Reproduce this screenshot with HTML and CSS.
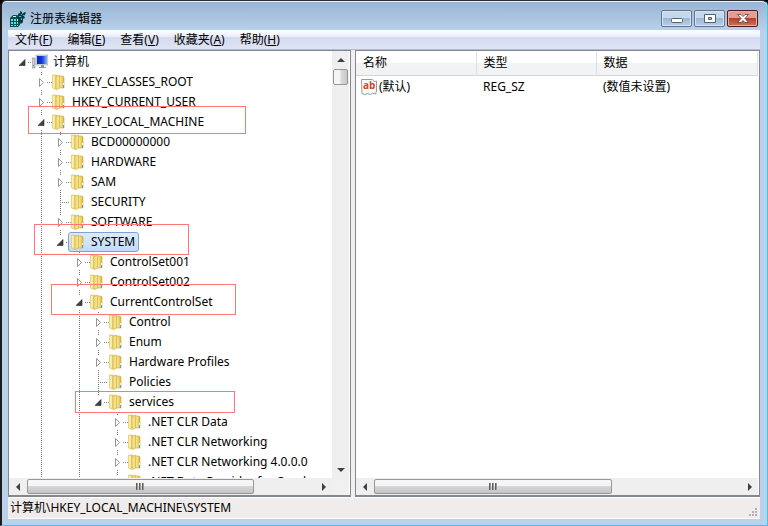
FILE: index.html
```html
<!DOCTYPE html>
<html lang="zh-CN">
<head>
    <meta charset="UTF-8">
    <meta name="viewport" content="width=device-width, initial-scale=1.0">
    <title>注册表编辑器</title>
    <link rel="stylesheet" href="styles.css">
</head>
<body>
    <svg class="defs" aria-hidden="true">
        <linearGradient id="gold" x1="0" x2="1"><stop offset="0" stop-color="#f9eda6"/><stop offset=".5" stop-color="#f0d873"/><stop offset="1" stop-color="#d8b33c"/></linearGradient>
        <linearGradient id="screen" x1="0" x2="1"><stop offset="0" stop-color="#0a2ab0"/><stop offset=".5" stop-color="#1238d8"/><stop offset="1" stop-color="#8cb4f4"/></linearGradient>
        <symbol id="folder" viewBox="0 0 16 16">
            <path d="M1.500 1h4l1 1v13H4l-2.500-1z" fill="url(#gold)" stroke="#d9bd55" stroke-width=".6"/>
            <path d="M8 2h4l1 1v11H8z" fill="url(#gold)" stroke="#cda83c" stroke-width=".6"/>
            <path d="M5 2.500L8.500 1v13L5.500 15.500 5 15z" fill="#f3e08a" stroke="#cfae48" stroke-width=".6"/>
            <path d="M3 2v11.500" stroke="#fff8cc"/>
            <path d="M12 11h1v3h-1z" fill="#4ba3df"/>
            <path d="M12 9h1v2h-1z" fill="#e9f6ff"/>
        </symbol>
        <symbol id="closed" viewBox="0 0 7 9"><path d="M1.500 .5v8L5.500 4.500z" fill="#fff" stroke="#969696"/></symbol>
        <symbol id="open" viewBox="0 0 7 9"><path d="M6 1.500v6H0z" fill="#404040" stroke="#262626" stroke-width=".6"/></symbol>
        <symbol id="left" viewBox="0 0 8 8"><path d="M6 0v8L2 4z" fill="#404040"/></symbol>
        <symbol id="right" viewBox="0 0 8 8"><path d="M2 0v8l4-4z" fill="#404040"/></symbol>
        <symbol id="up" viewBox="0 0 8 8"><path d="M0 6h8L4 2z" fill="#404040"/></symbol>
        <symbol id="down" viewBox="0 0 8 8"><path d="M0 2h8L4 6z" fill="#404040"/></symbol>
    </svg>

    <div class="window">
        <header class="titlebar">
            <svg class="app-icon" viewBox="0 0 16 16" aria-hidden="true">
                <path d="M0 7l3-3h4l3 2v8l-2 2H0z" fill="#0a4f52"/>
                <path d="M1 8h2v2H1zM4 8h2v2H4zM1 11h2v2H1zM4 11h2v2H4zM1 14h2v1H1zM4 14h2v1H4zM7 11h1v2H7zM7 14h1v1H7z" fill="#5fe3e0"/>
                <path d="M3 5h3v1H3zM7 8h1v2H7z" fill="#c8ffff"/>
                <path d="M8 3l2-1V0l2 1v2l3-2 1 1-2 3 1 2-2 1v3l-2 2-2-2-1-3z" fill="#083b3e"/>
                <path d="M11 3h1v1h-1zM13 4h1v1h-1zM9 5h2v1H9zM11 7h1v2h-1z" fill="#32c8c4"/>
            </svg>
            <h1>注册表编辑器</h1>
            <div class="controls">
                <button type="button" aria-label="最小化">
                    <svg width="12" height="11"><rect x=".5" y="5.500" width="11" height="4" rx="1" fill="#fff" stroke="#55606e"/></svg>
                </button>
                <button type="button" aria-label="最大化">
                    <svg width="12" height="11"><path d="M.5 1.500h11v8H.5zM4.500 4.500v2h3v-2z" fill="#fff" fill-rule="evenodd" stroke="#55606e"/></svg>
                </button>
                <button type="button" class="close" aria-label="关闭">
                    <svg width="12" height="11"><path d="M.5 1.500h3.500l2 2 2-2h3.500l-3.500 4 3.500 4H8l-2-2-2 2H.5l3.500-4z" fill="#fff" stroke="#5b3b45" stroke-width=".8"/></svg>
                </button>
            </div>
        </header>

        <nav class="menu">
            <button type="button">文件(<u>F</u>)</button>
            <button type="button">编辑(<u>E</u>)</button>
            <button type="button">查看(<u>V</u>)</button>
            <button type="button">收藏夹(<u>A</u>)</button>
            <button type="button">帮助(<u>H</u>)</button>
        </nav>

        <main class="panes">
            <section class="pane tree-pane">
                <div class="tree-view">
                    <ul class="tree root">
                        <li>
                            <div class="row"><button type="button" class="toggle" aria-label="折叠"><svg><use href="#open"/></svg></button>
                                <a href="#"><svg class="icon" viewBox="0 0 16 16">
                                    <path d="M0 4h3v10H0z" fill="#c9ced3" stroke="#81888f" stroke-width=".6"/><path d="M1 11h1v1H1z" fill="#3fc43f"/>
                                    <path d="M4 1h12v10H4z" fill="#d9dde3" stroke="#989ea6" stroke-width=".6"/><path d="M5 2h10v8H5z" fill="url(#screen)"/>
                                    <path d="M9 11h3v2h2v1H7v-1h2z" fill="#8b939b"/></svg>计算机</a></div>
                            <ul class="tree">
                                <li><div class="row"><button type="button" class="toggle" aria-label="展开"><svg><use href="#closed"/></svg></button><a href="#"><svg class="icon"><use href="#folder"/></svg>HKEY_CLASSES_ROOT</a></div></li>
                                <li><div class="row"><button type="button" class="toggle" aria-label="展开"><svg><use href="#closed"/></svg></button><a href="#"><svg class="icon"><use href="#folder"/></svg>HKEY_CURRENT_USER</a></div></li>
                                <li class="more">
                                    <div class="row"><button type="button" class="toggle" aria-label="折叠"><svg><use href="#open"/></svg></button><a href="#"><svg class="icon"><use href="#folder"/></svg>HKEY_LOCAL_MACHINE</a><span class="mark mark-machine"></span></div>
                                    <ul class="tree">
                                        <li><div class="row"><button type="button" class="toggle" aria-label="展开"><svg><use href="#closed"/></svg></button><a href="#"><svg class="icon"><use href="#folder"/></svg>BCD00000000</a></div></li>
                                        <li><div class="row"><button type="button" class="toggle" aria-label="展开"><svg><use href="#closed"/></svg></button><a href="#"><svg class="icon"><use href="#folder"/></svg>HARDWARE</a></div></li>
                                        <li><div class="row"><button type="button" class="toggle" aria-label="展开"><svg><use href="#closed"/></svg></button><a href="#"><svg class="icon"><use href="#folder"/></svg>SAM</a></div></li>
                                        <li><div class="row leaf"><a href="#"><svg class="icon"><use href="#folder"/></svg>SECURITY</a></div></li>
                                        <li><div class="row"><button type="button" class="toggle" aria-label="展开"><svg><use href="#closed"/></svg></button><a href="#"><svg class="icon"><use href="#folder"/></svg>SOFTWARE</a></div></li>
                                        <li>
                                            <div class="row"><button type="button" class="toggle" aria-label="折叠"><svg><use href="#open"/></svg></button><a href="#" class="selected"><svg class="icon"><use href="#folder"/></svg>SYSTEM</a><span class="mark mark-system"></span></div>
                                            <ul class="tree">
                                                <li><div class="row"><button type="button" class="toggle" aria-label="展开"><svg><use href="#closed"/></svg></button><a href="#"><svg class="icon"><use href="#folder"/></svg>ControlSet001</a></div></li>
                                                <li><div class="row"><button type="button" class="toggle" aria-label="展开"><svg><use href="#closed"/></svg></button><a href="#"><svg class="icon"><use href="#folder"/></svg>ControlSet002</a></div></li>
                                                <li class="more">
                                                    <div class="row"><button type="button" class="toggle" aria-label="折叠"><svg><use href="#open"/></svg></button><a href="#"><svg class="icon"><use href="#folder"/></svg>CurrentControlSet</a><span class="mark mark-current"></span></div>
                                                    <ul class="tree">
                                                        <li><div class="row"><button type="button" class="toggle" aria-label="展开"><svg><use href="#closed"/></svg></button><a href="#"><svg class="icon"><use href="#folder"/></svg>Control</a></div></li>
                                                        <li><div class="row"><button type="button" class="toggle" aria-label="展开"><svg><use href="#closed"/></svg></button><a href="#"><svg class="icon"><use href="#folder"/></svg>Enum</a></div></li>
                                                        <li><div class="row"><button type="button" class="toggle" aria-label="展开"><svg><use href="#closed"/></svg></button><a href="#"><svg class="icon"><use href="#folder"/></svg>Hardware Profiles</a></div></li>
                                                        <li><div class="row leaf"><a href="#"><svg class="icon"><use href="#folder"/></svg>Policies</a></div></li>
                                                        <li>
                                                            <div class="row"><button type="button" class="toggle" aria-label="折叠"><svg><use href="#open"/></svg></button><a href="#"><svg class="icon"><use href="#folder"/></svg>services</a><span class="mark mark-services"></span></div>
                                                            <ul class="tree">
                                                                <li><div class="row"><button type="button" class="toggle" aria-label="展开"><svg><use href="#closed"/></svg></button><a href="#"><svg class="icon"><use href="#folder"/></svg>.NET CLR Data</a></div></li>
                                                                <li><div class="row"><button type="button" class="toggle" aria-label="展开"><svg><use href="#closed"/></svg></button><a href="#"><svg class="icon"><use href="#folder"/></svg>.NET CLR Networking</a></div></li>
                                                                <li><div class="row"><button type="button" class="toggle" aria-label="展开"><svg><use href="#closed"/></svg></button><a href="#"><svg class="icon"><use href="#folder"/></svg>.NET CLR Networking 4.0.0.0</a></div></li>
                                                                <li><div class="row"><button type="button" class="toggle" aria-label="展开"><svg><use href="#closed"/></svg></button><a href="#"><svg class="icon"><use href="#folder"/></svg>.NET Data Provider for Oracle</a></div></li>
                                                            </ul>
                                                        </li>
                                                    </ul>
                                                </li>
                                            </ul>
                                        </li>
                                    </ul>
                                </li>
                            </ul>
                        </li>
                    </ul>
                </div>
                <div class="vscroll">
                    <button type="button" aria-label="向上"><svg><use href="#up"/></svg></button>
                    <div class="vthumb"></div>
                    <button type="button" class="end" aria-label="向下"><svg><use href="#down"/></svg></button>
                </div>
                <div class="hscroll">
                    <button type="button" aria-label="向左"><svg><use href="#left"/></svg></button>
                    <div class="track"><div class="hthumb tree-thumb"><i></i><i></i><i></i></div></div>
                    <button type="button" aria-label="向右"><svg><use href="#right"/></svg></button>
                </div>
                <div class="corner"></div>
            </section>

            <section class="pane list-pane">
                <table>
                    <thead>
                        <tr><th class="name">名称</th><th class="type">类型</th><th>数据</th></tr>
                    </thead>
                    <tbody>
                        <tr>
                            <td><div class="value"><svg class="icon" viewBox="0 0 16 16">
                                <path d="M.5 .5h11l1.500 2 2.500-.5v10l-1 3-3-1-2 1.500-3-1-2.500 1-3-1z" fill="#fff" stroke="#9a9a9a"/>
                                <text x="2" y="10" class="ab">ab</text></svg>(默认)</div></td>
                            <td>REG_SZ</td>
                            <td>(数值未设置)</td>
                        </tr>
                    </tbody>
                </table>
                <div class="hscroll">
                    <button type="button" aria-label="向左"><svg><use href="#left"/></svg></button>
                    <div class="track"><div class="hthumb list-thumb"><i></i><i></i><i></i></div></div>
                    <button type="button" aria-label="向右"><svg><use href="#right"/></svg></button>
                </div>
            </section>
        </main>

        <footer class="status">
            <span>计算机\HKEY_LOCAL_MACHINE\SYSTEM</span>
            <svg class="grip" width="9" height="9" fill="#b4b0b0"><path d="M6 0h2v2H6zM3 3h2v2H3zM6 3h2v2H6zM0 6h2v2H0zM3 6h2v2H3zM6 6h2v2H6z"/></svg>
        </footer>
    </div>
</body>
</html>
```
FILE: styles.css
```css
* {
    box-sizing: border-box;
}
body {
    margin: 0;
    background: #000;
    font-family: "Noto Sans", "Noto Sans CJK SC", sans-serif;
    font-size: 12px;
    line-height: 20px;
    color: #000;
}
button {
    padding: 0;
    border: 0;
    background: none;
    font: inherit;
    color: inherit;
}
a {
    color: inherit;
    text-decoration: none;
}
ul {
    margin: 0;
    padding: 0;
    list-style: none;
}
svg {
    display: block;
    flex: none;
}
.defs {
    position: absolute;
    width: 0;
    height: 0;
}

/* Window frame */
.window {
    display: flex;
    flex-direction: column;
    height: 100vh;
    padding: 0 7px 6px 6px;
    border: 1px solid #2fd0e4;
    border-color: #2b2f3a #2fd0e4 #2fd0e4 #1c1c1c;
    border-left-width: 2px;
    border-radius: 6px 6px 0 0;
    background: linear-gradient(#98b4d3, #b9d1ea 30px, #b9d1ea);
    box-shadow: inset 0 1px #e8f1fa;
}
.titlebar {
    display: flex;
    align-items: center;
    flex: none;
    height: 29px;
    padding-top: 6px;
}
.app-icon {
    width: 16px;
    height: 16px;
    margin: 0 4px 0 2px;
}
h1 {
    margin: 0;
    font-size: 12px;
    font-weight: 400;
}
.controls {
    display: flex;
    gap: 2px;
    margin-left: auto;
    padding-right: 2px;
}
.controls button {
    display: flex;
    align-items: center;
    justify-content: center;
    width: 31px;
    height: 17px;
    border: 1px solid #64758e;
    border-radius: 2px;
    background: linear-gradient(#c5d7ea 50%, #9db8d4 50%, #b8d0e8);
    box-shadow: inset 0 0 0 1px #d5e3f2;
}
.controls .close {
    border-color: #4c1a26;
    background: linear-gradient(#dfa092 50%, #b8402d 50%, #cf7358);
    box-shadow: inset 0 0 0 1px #e5b0a4;
}

/* Menu */
.menu {
    display: flex;
    gap: 15px;
    flex: none;
    height: 20px;
    padding-left: 7px;
    border-bottom: 1px solid #b6bccc;
    background: linear-gradient(#fff, #e9edf7 35%, #d4daee 40%, #dfe5f4);
}

/* Panes */
.panes {
    display: flex;
    gap: 4px;
    flex: 1;
    min-height: 0;
    background: #f0f0f0;
}
.pane {
    border: 1px solid #828790;
    border-bottom-width: 2px;
    background: #fff;
    min-width: 0;
    min-height: 0;
    overflow: hidden;
}
.tree-pane {
    display: grid;
    grid-template-columns: 1fr 17px;
    grid-template-rows: 1fr 17px;
    flex: 0 0 343px;
    padding-right: 1px;
}
.list-pane {
    display: flex;
    flex-direction: column;
    justify-content: space-between;
    flex: 1;
    padding: 1px 1px 0 0;
}

/* Tree */
.tree-view {
    overflow: hidden;
    min-height: 0;
    padding-top: 1px;
}
.tree {
    padding-left: 19px;
}
.root {
    padding-left: 9px;
}
.tree .tree > li {
    background: repeating-linear-gradient(#777 0 1px, transparent 1px 2px) 4px 0 / 1px 100% no-repeat;
}
.tree .tree > li:last-child {
    background-size: 1px 10px;
}
.tree .tree > .more:last-child,
.tree .tree .tree .tree .tree .tree > li:last-child {
    background-size: 1px 100%;
}
.row {
    position: relative;
    display: flex;
    align-items: center;
    height: 20px;
    background: repeating-linear-gradient(90deg, #888 0 1px, transparent 1px 2px) 10px 10px / 5px 1px no-repeat;
    white-space: nowrap;
}
.row.leaf {
    padding-left: 9px;
    background-position: 4px 10px;
    background-size: 10px 1px;
}
.toggle {
    width: 9px;
    height: 13px;
    background: #fff;
}
.toggle svg {
    width: 7px;
    height: 9px;
    margin: 0 auto;
}
.row a {
    display: flex;
    align-items: center;
    gap: 5px;
    height: 20px;
    margin-left: 3px;
    padding: 0 3px 0 1px;
    border: 1px solid transparent;
    border-radius: 3px;
}
.row .selected {
    border-color: #7da2ce;
    background: linear-gradient(#dcebfc, #c1dbfc);
}
.icon {
    width: 16px;
    height: 16px;
}

/* Highlight frames around the keys on the path */
.mark {
    position: absolute;
    z-index: 1;
    border: 1px solid #f77;
    pointer-events: none;
}
.mark-machine {
    left: -9px;
    top: -6px;
    width: 218px;
    height: 28px;
}
.mark-system {
    left: -22px;
    top: -8px;
    width: 155px;
    height: 31px;
}
.mark-current {
    left: -24px;
    top: -8px;
    width: 185px;
    height: 31px;
}
.mark-services {
    left: -19px;
    top: -1px;
    width: 160px;
    height: 22px;
}

/* Scrollbars */
.vscroll,
.hscroll {
    display: flex;
    background: #efefef;
}
.vscroll {
    flex-direction: column;
    align-items: center;
}
.hscroll {
    height: 17px;
}
.vscroll button,
.hscroll button {
    display: flex;
    align-items: center;
    justify-content: center;
    width: 17px;
    height: 17px;
}
.vscroll svg,
.hscroll svg {
    width: 8px;
    height: 8px;
}
.vscroll .end {
    margin-top: auto;
}
.vthumb,
.hthumb {
    border: 1px solid #979797;
    border-radius: 2px;
}
.vthumb {
    width: 15px;
    height: 16px;
    margin-top: 1px;
    background: linear-gradient(90deg, #f5f5f5 40%, #d8d8d8 60%, #c8c8c8);
}
.track {
    flex: 1;
    padding: 1px;
}
.hthumb {
    display: flex;
    align-items: center;
    justify-content: center;
    gap: 1px;
    height: 15px;
    background: linear-gradient(#f5f5f5 45%, #d6d6d9 50%, #c4c4c7);
}
.hthumb i {
    width: 2px;
    height: 7px;
    background: linear-gradient(90deg, #606060 50%, #999 50%);
}
.tree-thumb {
    width: 79%;
}
.list-thumb {
    width: 65%;
}
.corner {
    background: #f0f0f0;
}

/* Value list */
table {
    width: 100%;
    border-collapse: collapse;
    table-layout: fixed;
}
th {
    height: 23px;
    padding: 0 0 0 7px;
    border-right: 1px solid #dfdfdf;
    border-bottom: 1px solid #d5d5d5;
    background: linear-gradient(#fff 45%, #f2f3f5 50%, #f1f2f4);
    font-weight: 400;
    text-align: left;
}
.name,
.type {
    width: 120px;
}
td {
    height: 24px;
    padding: 0 0 0 7px;
}
.value {
    display: flex;
    align-items: center;
    gap: 2px;
    margin-left: -2px;
}
.ab {
    font: bold 10px "Open Sans", sans-serif;
    fill: #d2451e;
}

/* Status bar */
.status {
    display: flex;
    align-items: flex-end;
    justify-content: space-between;
    flex: none;
    height: 22px;
    padding: 0 2px;
    border-top: 1px solid #fff;
    border-bottom: 1px solid #fff;
    background: #f0eceb;
}
.grip {
    margin-bottom: 1px;
}
```
